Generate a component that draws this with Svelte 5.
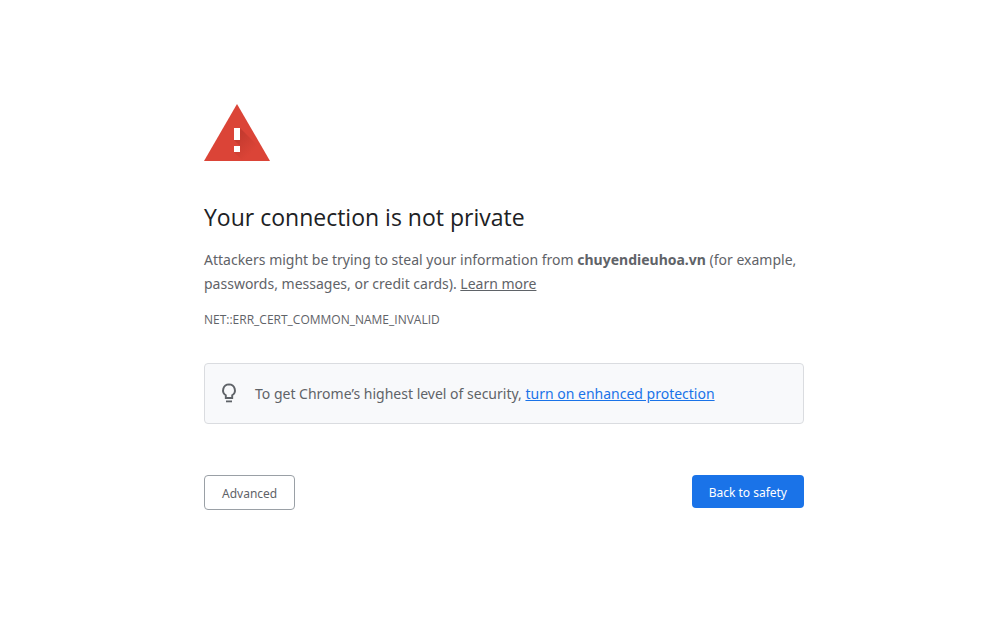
<script lang="ts">
	let { host = 'chuyendieuhoa.vn', errorCode = 'NET::ERR_CERT_COMMON_NAME_INVALID' }: {
		host?: string;
		errorCode?: string;
	} = $props();
</script>

<main class="interstitial">
	<svg class="warning-icon" viewBox="0 0 66 57" aria-hidden="true">
		<defs>
			<linearGradient id="shade" gradientUnits="userSpaceOnUse" x1="32" y1="34" x2="47" y2="49">
				<stop offset="0" stop-color="#b8352a" stop-opacity="0.65" />
				<stop offset="1" stop-color="#b8352a" stop-opacity="0" />
			</linearGradient>
		</defs>
		<path d="M33 0 66 57H0z" fill="#db4437" />
		<path d="M36 24 56 44 62 57H39l-9-9 6-6-6-6z" fill="url(#shade)" />
		<path d="M30 24h6v12h-6zM30 42h6v6h-6z" fill="#fff" />
	</svg>

	<h1>Your connection is not private</h1>
	<p class="message">
		Attackers might be trying to steal your information from <strong>{host}</strong> (for example, passwords, messages, or credit cards). <a href="#learn-more">Learn more</a>
	</p>
	<div class="error-code">{errorCode}</div>

	<div class="protection">
		<svg class="bulb" viewBox="0 1 24 24" aria-hidden="true">
			<path d="M12 3.400a5.900 5.900 0 0 0-3.200 10.850V17h6.400v-2.750A5.900 5.900 0 0 0 12 3.400z" fill="none" stroke="#5f6368" stroke-width="1.900" />
			<path d="M9 19.500h6v1.800H9z" fill="#5f6368" />
		</svg>
		<p>To get Chrome’s highest level of security, <a href="#enhanced-protection">turn on enhanced protection</a></p>
	</div>

	<div class="actions">
		<button type="button" class="secondary">Advanced</button>
		<button type="button" class="primary">Back to safety</button>
	</div>
</main>

<style>
	:global(body) { background: #fff; }

	.interstitial {
		box-sizing: border-box;
		max-width: 600px;
		margin: 0 auto;
		padding-top: 104px;
		color: #5f6368;
		font-family: 'Noto Sans', 'Open Sans', sans-serif;
		font-size: 14px;
		line-height: 24px;
	}

	.warning-icon { display: block; width: 66px; height: 57px; margin-bottom: 40px; }

	h1 { margin: 0 0 15px; color: #202124; font-family: 'Open Sans', sans-serif; font-size: 23px; font-weight: 400; line-height: 32px; }

	.message { margin: 0; }
	.message a { color: inherit; }

	.error-code { margin-top: 12px; font-family: 'Open Sans', sans-serif; font-size: 12px; }

	.protection {
		display: flex; align-items: flex-start; gap: 14px;
		margin-top: 31px; padding: 18px 12px 17px;
		background: #f8f9fb; border: 1px solid #dadce0; border-radius: 4px;
	}
	.protection p { margin: 0; }
	.protection a { color: #1a73e8; }
	.bulb { flex: none; width: 24px; height: 24px; }

	.actions { display: flex; align-items: flex-start; justify-content: space-between; margin-top: 51px; }

	button {
		border-radius: 4px; cursor: pointer;
		font-family: inherit; font-size: 12px; line-height: 17px;
		padding: 9px 17px 7px;
	}
	.secondary { background: #fff; border: 1px solid #9aa0a6; color: #5f6368; }
	.primary { background: #1a73e8; border: none; color: #fff; }
</style>
